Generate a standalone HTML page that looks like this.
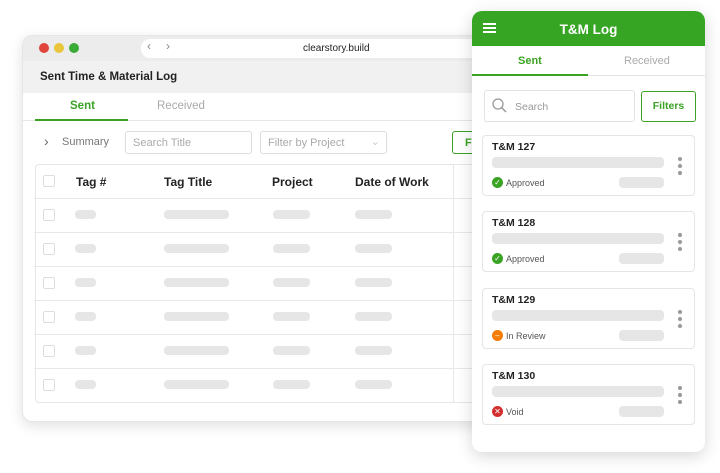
<!DOCTYPE html><html><head><style>
*{margin:0;padding:0;box-sizing:border-box}
body{width:720px;height:473px;background:#fff;font-family:"Liberation Sans",Arial,sans-serif;position:relative;overflow:hidden}
.abs{position:absolute}
.win{left:22px;top:35px;width:520px;height:387px;border-radius:10px;background:#fff;box-shadow:0 4px 14px rgba(0,0,0,.12);border:1px solid #e6e6e6;overflow:hidden}
.bar{background:#e6e6e6;border-radius:4px;height:9px;position:absolute}
.cb{position:absolute;width:12px;height:12px;border:1px solid #ddd;border-radius:2px;background:#fff}
.hd{position:absolute;font-size:12px;font-weight:bold;color:#222;top:175px}
.hl{position:absolute;left:34px;width:440px;height:1px;background:#e8e8e8}
.mob{left:472px;top:11px;width:233px;height:441px;background:#fff;border-radius:10px;box-shadow:0 4px 16px rgba(0,0,0,.16);overflow:hidden}
.card{position:absolute;left:10px;width:213px;height:61px;border:1px solid #e5e5e5;border-radius:4px;background:#fff}
.card b{position:absolute;left:9px;top:5px;font-size:10.5px;color:#222}
.st{position:absolute;left:9px;top:41px;font-size:9px;color:#555;display:flex;align-items:center;gap:3px}
.ic{width:11px;height:11px;border-radius:50%;display:inline-block;color:#fff;font-size:8px;line-height:11px;text-align:center}
.dots{position:absolute;left:195px;top:21px}
.dots i{display:block;width:4px;height:4px;border-radius:50%;background:#999;margin-bottom:3px}
</style></head><body>
<div class="abs win">
 <div class="abs" style="left:0;top:0;width:520px;height:25px;background:#ececec"></div>
 <div class="abs" style="left:16px;top:7px;width:10px;height:10px;border-radius:50%;background:#e0443a"></div>
 <div class="abs" style="left:31px;top:7px;width:10px;height:10px;border-radius:50%;background:#e8c53a"></div>
 <div class="abs" style="left:46px;top:7px;width:10px;height:10px;border-radius:50%;background:#3aab35"></div>
 <div class="abs" style="left:118px;top:3px;width:402px;height:19px;background:#fff;border-radius:9px 0 0 9px;font-size:10px;color:#222;padding-left:162px;line-height:19px">clearstory.build</div>
 <div class="abs" style="left:124px;top:3px;font-size:12px;color:#888">&#8249;</div>
 <div class="abs" style="left:143px;top:3px;font-size:12px;color:#888">&#8250;</div>
 <div class="abs" style="left:0;top:25px;width:520px;height:32px;background:#f1f1f1;font-size:11.5px;font-weight:bold;color:#222;padding:10px 0 0 17px">Sent Time &amp; Material Log</div>
 <div class="abs" style="left:47px;top:64px;font-size:11.5px;font-weight:bold;color:#3aa324">Sent</div>
 <div class="abs" style="left:134px;top:64px;font-size:11.5px;color:#aaa">Received</div>
 <div class="abs" style="left:0;top:84px;width:520px;height:1px;background:#e6e6e6"></div>
 <div class="abs" style="left:12px;top:83px;width:93px;height:2px;background:#3aa324"></div>
 <div class="abs" style="left:21px;top:97px;font-size:14px;color:#666">&#8250;</div>
 <div class="abs" style="left:39px;top:100px;font-size:11px;color:#777">Summary</div>
 <div class="abs" style="left:102px;top:95px;width:127px;height:23px;border:1px solid #ddd;border-radius:3px;font-size:11px;color:#aaa;padding:5px 7px">Search Title</div>
 <div class="abs" style="left:237px;top:95px;width:127px;height:23px;border:1px solid #ddd;border-radius:3px;font-size:11px;color:#aaa;padding:5px 7px">Filter by Project<span style="position:absolute;right:6px;top:3px;color:#ccc">&#8964;</span></div>
 <div class="abs" style="left:429px;top:95px;width:40px;height:23px;border:1.5px solid #3aa324;border-radius:3px;font-size:11px;color:#3aa324;font-weight:bold;padding:5px 12px">F</div>
 <div class="abs" style="left:12px;top:128px;width:480px;height:239px;border:1px solid #e6e6e6;border-radius:4px"></div>
 <div class="abs" style="left:430px;top:128px;width:1px;height:239px;background:#e6e6e6"></div>
</div>
<div class="cb" style="left:43px;top:175px"></div>
<div class="hd" style="left:76px">Tag #</div><div class="hd" style="left:164px">Tag Title</div><div class="hd" style="left:272px">Project</div><div class="hd" style="left:355px">Date of Work</div>
<div class="hl" style="top:198px"></div><div class="hl" style="top:232px"></div><div class="hl" style="top:266px"></div><div class="hl" style="top:300px"></div><div class="hl" style="top:334px"></div><div class="hl" style="top:368px"></div>
<div class="cb" style="left:43px;top:209px"></div><div class="bar" style="left:75px;top:210px;width:21px"></div><div class="bar" style="left:164px;top:210px;width:65px"></div><div class="bar" style="left:273px;top:210px;width:37px"></div><div class="bar" style="left:355px;top:210px;width:37px"></div>
<div class="cb" style="left:43px;top:243px"></div><div class="bar" style="left:75px;top:244px;width:21px"></div><div class="bar" style="left:164px;top:244px;width:65px"></div><div class="bar" style="left:273px;top:244px;width:37px"></div><div class="bar" style="left:355px;top:244px;width:37px"></div>
<div class="cb" style="left:43px;top:277px"></div><div class="bar" style="left:75px;top:278px;width:21px"></div><div class="bar" style="left:164px;top:278px;width:65px"></div><div class="bar" style="left:273px;top:278px;width:37px"></div><div class="bar" style="left:355px;top:278px;width:37px"></div>
<div class="cb" style="left:43px;top:311px"></div><div class="bar" style="left:75px;top:312px;width:21px"></div><div class="bar" style="left:164px;top:312px;width:65px"></div><div class="bar" style="left:273px;top:312px;width:37px"></div><div class="bar" style="left:355px;top:312px;width:37px"></div>
<div class="cb" style="left:43px;top:345px"></div><div class="bar" style="left:75px;top:346px;width:21px"></div><div class="bar" style="left:164px;top:346px;width:65px"></div><div class="bar" style="left:273px;top:346px;width:37px"></div><div class="bar" style="left:355px;top:346px;width:37px"></div>
<div class="cb" style="left:43px;top:379px"></div><div class="bar" style="left:75px;top:380px;width:21px"></div><div class="bar" style="left:164px;top:380px;width:65px"></div><div class="bar" style="left:273px;top:380px;width:37px"></div><div class="bar" style="left:355px;top:380px;width:37px"></div>

<div class="abs mob">
 <div class="abs" style="left:0;top:0;width:233px;height:35px;background:#37a524"></div>
 <div class="abs" style="left:11px;top:12px;width:13px;height:2px;background:#fff;box-shadow:0 4px 0 #fff,0 8px 0 #fff"></div>
 <div class="abs" style="left:0;top:11px;width:233px;text-align:center;font-size:13.5px;font-weight:bold;color:#fff">T&amp;M Log</div>
 <div class="abs" style="left:46px;top:44px;font-size:11px;font-weight:bold;color:#3aa324">Sent</div>
 <div class="abs" style="left:152px;top:44px;font-size:11px;color:#aaa">Received</div>
 <div class="abs" style="left:0;top:64px;width:233px;height:1px;background:#e3e3e3"></div>
 <div class="abs" style="left:0;top:63px;width:116px;height:2px;background:#3aa324"></div>
 <div class="abs" style="left:12px;top:79px;width:151px;height:32px;border:1px solid #e3e3e3;border-radius:3px"></div>
 <svg class="abs" style="left:20px;top:87px" width="15" height="15" viewBox="0 0 15 15"><circle cx="6" cy="6" r="5" fill="none" stroke="#999" stroke-width="1.3"/><path d="M9.5 9.5L14 14" stroke="#999" stroke-width="1.5"/></svg>
 <div class="abs" style="left:43px;top:90px;font-size:10.5px;color:#999">Search</div>
 <div class="abs" style="left:169px;top:80px;width:55px;height:31px;border:1.5px solid #3aa324;border-radius:3px;font-size:10.5px;font-weight:bold;color:#3aa324;text-align:center;line-height:28px">Filters</div>
 <div class="card" style="top:124px"><b>T&amp;M 127</b><div class="bar" style="left:9px;top:21px;width:172px;height:11px"></div><div class="bar" style="left:136px;top:41px;width:45px;height:11px"></div><div class="st"><span class="ic" style="background:#3aa324">✓</span>Approved</div><div class="dots"><i></i><i></i><i></i></div></div>
 <div class="card" style="top:200px"><b>T&amp;M 128</b><div class="bar" style="left:9px;top:21px;width:172px;height:11px"></div><div class="bar" style="left:136px;top:41px;width:45px;height:11px"></div><div class="st"><span class="ic" style="background:#3aa324">✓</span>Approved</div><div class="dots"><i></i><i></i><i></i></div></div>
 <div class="card" style="top:277px"><b>T&amp;M 129</b><div class="bar" style="left:9px;top:21px;width:172px;height:11px"></div><div class="bar" style="left:136px;top:41px;width:45px;height:11px"></div><div class="st"><span class="ic" style="background:#f57c00">–</span>In Review</div><div class="dots"><i></i><i></i><i></i></div></div>
 <div class="card" style="top:353px"><b>T&amp;M 130</b><div class="bar" style="left:9px;top:21px;width:172px;height:11px"></div><div class="bar" style="left:136px;top:41px;width:45px;height:11px"></div><div class="st"><span class="ic" style="background:#d32f2f">✕</span>Void</div><div class="dots"><i></i><i></i><i></i></div></div>
</div>
</body></html>
